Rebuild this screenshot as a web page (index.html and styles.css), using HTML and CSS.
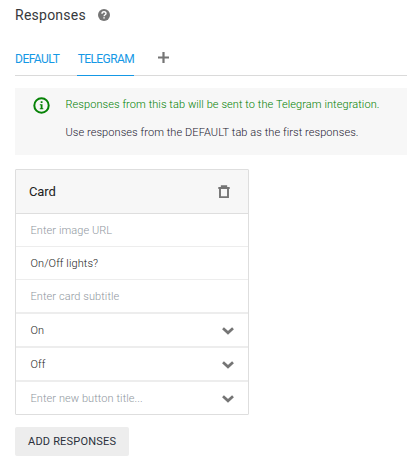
FILE: index.html
```html
<!DOCTYPE html>
<html lang="en">
<head>
<meta charset="utf-8">
<title>Responses</title>
<link rel="stylesheet" href="styles.css">
</head>
<body>
<main class="panel">
  <header class="heading">
    <h1><span>Responses</span></h1>
    <svg class="help" width="12" height="12" viewBox="0 0 12 12"><circle cx="6" cy="6" r="6" fill="#757575"/><path d="M4 4.7C4 3.4 4.8 2.7 6 2.7S8 3.4 8 4.5C8 5.7 6.1 5.8 6.1 7.2" fill="none" stroke="#fff" stroke-width="1.4"/><path d="M5.3 8.2h1.5v1.4H5.3z" fill="#fff"/></svg>
  </header>
  <nav class="tabs">
    <a class="tab"><span>DEFAULT</span></a>
    <a class="tab active"><span>TELEGRAM</span></a>
    <svg class="plus" width="11" height="11" viewBox="0 0 11 11"><path d="M5.5 0v11M0 5.5h11" stroke="#757575" stroke-width="2.2"/></svg>
  </nav>
  <section class="notice">
    <svg class="info" width="17" height="17" viewBox="0 0 17 17"><circle cx="8.5" cy="8.5" r="7.2" fill="none" stroke="#078307" stroke-width="2"/><path d="M7.7 4.3h1.8v1.7H7.7zM6.8 7.2h2.7v4h.8v1.1H6.8v-1.1h.9V8.3h-.9z" fill="#078307"/></svg>
    <div class="notice-text">
      <p class="sent"><span>Responses from this tab will be sent to the Telegram integration.</span></p>
      <p class="use"><span>Use responses from the DEFAULT tab as the first responses.</span></p>
    </div>
  </section>
  <section class="card">
    <header class="card-header">
      <h2>Card</h2>
      <svg width="12" height="14" viewBox="0 0 12 14"><path d="M2 3v9.1h8V3M.3 3h11.4M3.8 2.5V1.1h4.4v1.4" fill="none" stroke="#757575" stroke-width="1.9"/></svg>
    </header>
    <div class="row hint"><span class="image-url">Enter image URL</span></div>
    <div class="row"><span>On/Off lights?</span></div>
    <div class="row hint"><span class="subtitle">Enter card subtitle</span></div>
    <div class="row option"><span>On</span><svg width="12" height="8" viewBox="0 0 12 8"><path d="M1 1.2l5 4.6 5-4.6" fill="none" stroke="#757575" stroke-width="2.7"/></svg></div>
    <div class="row option"><span>Off</span><svg width="12" height="8" viewBox="0 0 12 8"><path d="M1 1.2l5 4.6 5-4.6" fill="none" stroke="#757575" stroke-width="2.7"/></svg></div>
    <div class="row option hint"><span class="title">Enter new button title...</span><svg width="12" height="8" viewBox="0 0 12 8"><path d="M1 1.2l5 4.6 5-4.6" fill="none" stroke="#757575" stroke-width="2.7"/></svg></div>
  </section>
  <button class="add"><span>ADD RESPONSES</span></button>
</main>
</body>
</html>
```
FILE: styles.css
```css
* { box-sizing: border-box; }
body { margin: 0; background: #fff; color: #37393c; font: 11px/16px Roboto, "Liberation Sans", sans-serif; overflow: hidden; }
.panel { padding-left: 15px; }
h1, h2, p { margin: 0; font-weight: 400; }
svg { display: block; flex: none; }
.heading { display: flex; align-items: center; height: 30px; }
h1 { width: 83px; font-size: 14px; line-height: 18px; letter-spacing: 0.25px; white-space: nowrap; }
.tabs { display: flex; height: 46px; border-bottom: 1px solid #dadada; }
.tab { height: 46px; padding-top: 21px; margin-right: 17px; color: #1598e5; font-size: 12px; line-height: 16px; letter-spacing: -0.5px; white-space: nowrap; width: 45px; }
.tab.active { width: 57px; margin-right: 24px; padding-left: 0.7px; letter-spacing: -0.6px; border-bottom: 1px solid #1598e5; }
.plus { margin-top: 22px; }
.notice { display: flex; height: 67px; margin-top: 12px; padding: 9px 0 0 18px; background: #f7f7f7; }
.notice-text { margin-left: 15.5px; white-space: nowrap; }
.notice-text p { font-weight: 300; line-height: 16px; letter-spacing: 0.08px; }
.notice-text .sent { color: #008000; margin-bottom: 12px; }
.notice-text .use { color: #1c2030; }
.card { width: 234px; margin-top: 14px; border: 1px solid #dedede; border-radius: 1px; }
.card-header { display: flex; align-items: center; justify-content: space-between; height: 44px; padding: 0 18px 0 13px; background: #f7f7f7; border-bottom: 1px solid #dedede; }
h2 { font-size: 13px; color: #212121; letter-spacing: -0.1px; }
.row { display: flex; align-items: center; justify-content: space-between; height: 33px; padding: 1px 14px 0 14.5px; border-bottom: 1px solid #ededed; font-weight: 300; color: #222; letter-spacing: 0.08px; white-space: nowrap; }
.row:nth-child(4) { height: 34px; border-bottom-width: 2px; }
.option { height: 34px; border-bottom-width: 2px; }
.option:last-child { height: 32px; border-bottom: 0; }
.row.hint { color: #8f979e; }
.add { display: block; width: 114px; height: 29px; margin-top: 12px; padding: 0 0 0 13px; border: 0; border-radius: 2px; background: #ededed; color: #2b303b; font: 11px/29px Roboto, sans-serif; letter-spacing: 0.2px; text-align: left; white-space: nowrap; }
```
